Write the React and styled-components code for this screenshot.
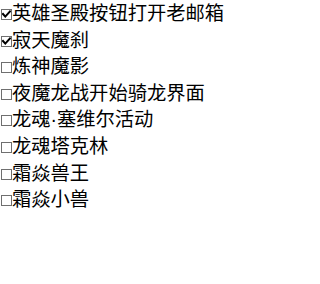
import React, { useState } from 'react';
import styled, { createGlobalStyle } from 'styled-components';

const GlobalStyle = createGlobalStyle`
  html, body {
    margin: 0;
    padding: 0;
    background: #ffffff;
  }
  body {
    font-family: "Liberation Sans", "Noto Sans CJK SC", sans-serif;
    color: #000000;
  }
`;

const List = styled.div`
  padding-top: 1px;
  width: 271px;
`;

const Row = styled.label`
  display: block;
  font-size: 19.3px;
  line-height: 26.6px;
  white-space: nowrap;
  cursor: default;
`;

const HiddenInput = styled.input`
  position: absolute;
  opacity: 0;
  width: 0;
  height: 0;
  margin: 0;
`;

const Box = styled.span`
  display: inline-block;
  box-sizing: border-box;
  width: 11px;
  height: 11px;
  margin: 0 0 0 1px;
  border: 1px solid #6f6f6f;
  background: #ffffff;
  vertical-align: baseline;
  position: relative;

  svg {
    position: absolute;
    left: 0;
    top: 0;
    display: ${({ $checked }) => ($checked ? 'block' : 'none')};
  }
`;

const items = [
  { label: '英雄圣殿按钮打开老邮箱', checked: true },
  { label: '寂天魔刹', checked: true },
  { label: '炼神魔影', checked: false },
  { label: '夜魔龙战开始骑龙界面', checked: false },
  { label: '龙魂·塞维尔活动', checked: false },
  { label: '龙魂塔克林', checked: false },
  { label: '霜焱兽王', checked: false },
  { label: '霜焱小兽', checked: false },
];

const CheckRow = ({ label, initial }) => {
  const [checked, setChecked] = useState(initial);
  return (
    <Row>
      <HiddenInput
        type="checkbox"
        checked={checked}
        onChange={(e) => setChecked(e.target.checked)}
      />
      <Box $checked={checked}>
        <svg width="9" height="9" viewBox="0 0 9 9">
          <path
            d="M1 4 L3.3 6.6 L8 1.4"
            fill="none"
            stroke="#000"
            strokeWidth="2"
            strokeLinecap="square"
          />
        </svg>
      </Box>
      {label}
    </Row>
  );
};

const App = () => (
  <>
    <GlobalStyle />
    <List>
      {items.map((item) => (
        <CheckRow key={item.label} label={item.label} initial={item.checked} />
      ))}
    </List>
  </>
);

export default App;
